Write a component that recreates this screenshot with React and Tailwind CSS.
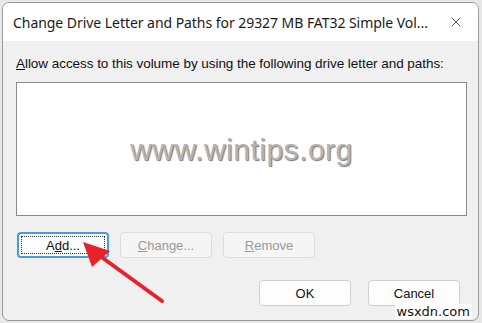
import { X } from 'lucide-react';

const btn = 'h-[26px] w-[92px] rounded-[4px] border text-[13px] flex items-center justify-center';

const App = () => {
  return (
    <div className="w-[482px] h-[323px] bg-[#e8e8e8] relative overflow-hidden" style={{ fontFamily: '"Noto Sans", "Open Sans", sans-serif' }}>
      <div className="absolute left-[2px] top-[2px] w-[477px] h-[319px] rounded-[7px] border border-[#9a9a9a] bg-[#f0f0f0] overflow-hidden flex flex-col">
        {/* title bar */}
        <div className="h-[38px] bg-white flex items-center justify-between pl-[10px] pr-[14px] shrink-0">
          <span className="text-[14px] text-[#1a1a1a] tracking-[-0.05px]">
            Change Drive Letter and Paths for 29327 MB FAT32 Simple Vol...
          </span>
          <X className="w-[16px] h-[16px] text-[#333]" strokeWidth={1.3} />
        </div>

        <div className="px-[13px] pt-[13px] flex flex-col" style={{ fontFamily: '"Liberation Sans", Arial, sans-serif' }}>
          <div className="text-[13.5px] text-[#111] tracking-[-0.05px] whitespace-nowrap">
            <span className="underline">A</span>llow access to this volume by using the following drive letter and paths:
          </div>
          <div className="mt-[8px] h-[134px] w-[451px] bg-white border border-[#8a8a8a] flex items-center justify-center">
            <span className="text-[30px] text-[#b4b4b4] tracking-[0.5px]" style={{ textShadow: '1px 1px 1px #777' }}>
              www.wintips.org
            </span>
          </div>

          <div className="mt-[16px] flex gap-[11px] pl-[1px]">
            <div className={`${btn} border-[#4a9ae0] border-2 bg-[#fdfdfd] p-[2px]`}>
              <div className="w-full h-full border border-dotted border-[#333] flex items-center justify-center text-[#111]">
                A<span className="underline">d</span>d...
              </div>
            </div>
            <div className={`${btn} border-[#dcdcdc] bg-[#f5f5f5] text-[#9a9a9a]`}>
              <span><span className="underline">C</span>hange...</span>
            </div>
            <div className={`${btn} border-[#dcdcdc] bg-[#f5f5f5] text-[#9a9a9a]`}>
              <span><span className="underline">R</span>emove</span>
            </div>
          </div>

          <div className="mt-[22px] flex justify-end gap-[17px] pr-[5px]">
            <div className={`${btn} border-[#d0d0d0] bg-[#fdfdfd] text-[#111]`}>OK</div>
            <div className={`${btn} border-[#d0d0d0] bg-[#fdfdfd] text-[#111]`}>Cancel</div>
          </div>
        </div>
      </div>

      {/* red arrow */}
      <svg className="absolute left-0 top-0" width="482" height="323">
        <line x1="162" y1="301" x2="100" y2="256" stroke="#e8222a" strokeWidth="4" strokeLinecap="round" />
        <polygon points="83,242 110,251 92,267" fill="#e8222a" />
      </svg>

      <div className="absolute right-[10px] bottom-[4px] bg-white px-[2px] text-[13px] leading-[15px] text-[#111]" style={{ fontFamily: '"DejaVu Sans", sans-serif' }}>
        wsxdn.com
      </div>
    </div>
  );
};

export default App;
